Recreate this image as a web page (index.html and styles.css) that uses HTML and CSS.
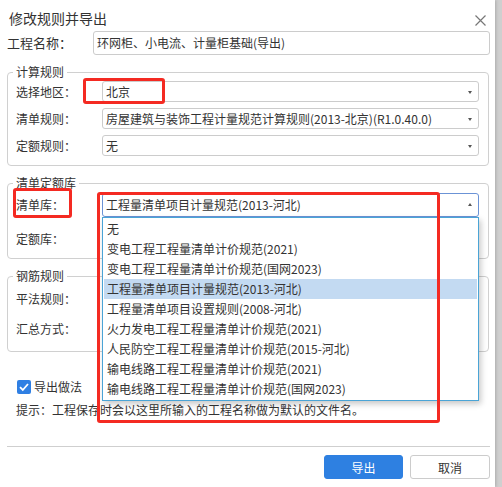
FILE: index.html
```html
<!DOCTYPE html>
<html lang="zh-CN">
<head>
    <meta charset="UTF-8">
    <title>修改规则并导出</title>
    <link rel="stylesheet" href="styles.css">
</head>
<body>
    <div class="dialog">
        <div class="title">
            <span>修改规则并导出</span>
            <svg class="close" width="11" height="11" viewBox="0 0 11 11">
                <path d="M0.5 0.5 L10.5 10.5 M10.5 0.5 L0.5 10.5" stroke="#777" stroke-width="1.2" fill="none"/>
            </svg>
        </div>

        <div class="row name-row">
            <span class="lbl">工程名称：</span>
            <div class="input">环网柜、小电流、计量柜基础(导出)</div>
        </div>

        <fieldset class="group calc">
            <legend>计算规则</legend>
            <div class="row">
                <span class="lbl">选择地区：</span>
                <div class="select">北京<i class="arrow"></i></div>
            </div>
            <div class="row">
                <span class="lbl">清单规则：</span>
                <div class="select">房屋建筑与装饰工程计量规范计算规则(2013-北京)(R1.0.40.0)<i class="arrow"></i></div>
            </div>
            <div class="row">
                <span class="lbl">定额规则：</span>
                <div class="select">无<i class="arrow"></i></div>
            </div>
        </fieldset>

        <fieldset class="group lib">
            <legend>清单定额库</legend>
            <div class="row">
                <span class="lbl">清单库：</span>
                <div class="select open">工程量清单项目计量规范(2013-河北)<i class="arrow up"></i></div>
            </div>
            <div class="row">
                <span class="lbl">定额库：</span>
                <div class="select"><i class="arrow"></i></div>
            </div>
        </fieldset>

        <fieldset class="group rebar">
            <legend>钢筋规则</legend>
            <div class="row">
                <span class="lbl">平法规则：</span>
                <div class="select"><i class="arrow"></i></div>
            </div>
            <div class="row">
                <span class="lbl">汇总方式：</span>
                <div class="select"><i class="arrow"></i></div>
            </div>
        </fieldset>

        <div class="check-row">
            <span class="checkbox">
                <svg width="14" height="14" viewBox="0 0 14 14">
                    <path d="M3 7.2 L5.8 10 L11 4" stroke="#fff" stroke-width="1.8" fill="none"/>
                </svg>
            </span>
            <span>导出做法</span>
        </div>
        <div class="hint">提示：工程保存时会以这里所输入的工程名称做为默认的文件名。</div>

        <div class="sep"></div>
        <div class="buttons">
            <button class="btn primary">导出</button>
            <button class="btn">取消</button>
        </div>

        <!-- 清单库下拉列表 -->
        <ul class="dropdown">
            <li>无</li>
            <li>变电工程工程量清单计价规范(2021)</li>
            <li>变电工程工程量清单计价规范(国网2023)</li>
            <li class="active">工程量清单项目计量规范(2013-河北)</li>
            <li>工程量清单项目设置规则(2008-河北)</li>
            <li>火力发电工程工程量清单计价规范(2021)</li>
            <li>人民防空工程工程量清单计价规范(2015-河北)</li>
            <li>输电线路工程工程量清单计价规范(2021)</li>
            <li>输电线路工程工程量清单计价规范(国网2023)</li>
        </ul>

        <!-- 标注框 -->
        <div class="mark mark-area"></div>
        <div class="mark mark-lib"></div>
        <div class="mark mark-list"></div>
    </div>
</body>
</html>
```

FILE: styles.css
```css
* {
    box-sizing: border-box;
}
body {
    margin: 0;
    background: #cfcfcf;
    font-family: "Noto Sans CJK SC", "Microsoft YaHei", sans-serif;
    font-size: 12px;
    color: #333;
}
.dialog {
    position: relative;
    width: 495px;
    height: 487px;
    background: #fff;
    padding: 0 5px 0 7px;
    box-shadow: 1px 0 3px rgba(0, 0, 0, 0.18);
}
.title {
    display: flex;
    justify-content: space-between;
    height: 31px;
    padding: 8px 0 0 2px;
    line-height: 20px;
    font-size: 14px;
}
.close {
    margin: 7px 4px 0 0;
}
.row {
    display: flex;
    align-items: center;
    height: 21px;
}
.row + .row {
    margin-top: 6px;
}
.lbl {
    width: 86px;
    flex-shrink: 0;
    line-height: 16px;
}
.name-row {
    height: 24px;
}
.name-row .lbl {
    font-size: 13px;
}
.input {
    flex: 1;
    height: 24px;
    line-height: 22px;
    border: 1px solid #ccc;
    border-radius: 3px;
    padding-left: 3px;
}
.select {
    position: relative;
    flex: 1;
    height: 100%;
    border: 1px solid #ccc;
    border-radius: 3px;
    padding-left: 3px;
    line-height: 19px;
    white-space: nowrap;
    overflow: hidden;
}
.select.open {
    border-color: #6b93d6;
    line-height: 22px;
}
.arrow {
    position: absolute;
    right: 6px;
    top: 50%;
    margin-top: -1px;
    border-left: 2.5px solid transparent;
    border-right: 2.5px solid transparent;
    border-top: 3px solid #555;
}
.arrow.up {
    margin-top: -2px;
    border-top: 0;
    border-bottom: 3px solid #555;
}
fieldset.group {
    margin: 9px 1px 0 0;
    padding: 0 9px 0 8px;
    border: 1px solid #d0d0d0;
    border-radius: 4px;
    min-width: 0;
}
legend {
    margin-left: -3px;
    padding: 0 3px;
    line-height: 16px;
}
.calc {
    padding-top: 1px !important;
    padding-bottom: 9px !important;
}
.lib {
    padding-top: 2px !important;
    padding-bottom: 7px !important;
}
.lib .row,
.rebar .row {
    height: 24px;
}
.lib .row + .row {
    margin-top: 10px;
}
.rebar {
    padding-top: 3px !important;
    padding-bottom: 10px !important;
}
.check-row {
    display: flex;
    align-items: center;
    gap: 3px;
    height: 16px;
    margin-top: 27px;
    padding-left: 10px;
    line-height: 16px;
}
.checkbox {
    display: block;
    width: 14px;
    height: 14px;
    background: #2f7fe3;
    border-radius: 2px;
}
.checkbox svg {
    display: block;
}
.hint {
    margin-top: 7px;
    padding-left: 9px;
    line-height: 16px;
}
.sep {
    margin-top: 28px;
    height: 1px;
    background: #cfcfcf;
}
.buttons {
    display: flex;
    justify-content: flex-end;
    gap: 7px;
    margin-top: 8px;
}
.btn {
    width: 80px;
    height: 24px;
    border: 1px solid #ccc;
    border-radius: 3px;
    background: #fff;
    font-family: inherit;
    font-size: 12px;
    color: #333;
    padding: 0;
}
.btn.primary {
    width: 79px;
    background: #2e80e1;
    border-color: #2e80e1;
    color: #fff;
}
.dropdown {
    position: absolute;
    left: 102px;
    top: 217px;
    width: 377px;
    margin: 0;
    padding: 1px;
    list-style: none;
    background: #fff;
    border: 1px solid #4aa4d6;
    box-shadow: 2px 3px 6px rgba(0, 0, 0, 0.22);
}
.dropdown li {
    height: 20px;
    line-height: 20px;
    padding-left: 3px;
    white-space: nowrap;
}
.dropdown li.active {
    background: #c3daf2;
}
.mark {
    position: absolute;
    border: 3px solid #f42a22;
    border-radius: 3px;
}
.mark-area {
    left: 83px;
    top: 78px;
    width: 82px;
    height: 26px;
}
.mark-lib {
    left: 13px;
    top: 188px;
    width: 59px;
    height: 30px;
}
.mark-list {
    left: 97px;
    top: 192px;
    width: 343px;
    height: 231px;
}
```
